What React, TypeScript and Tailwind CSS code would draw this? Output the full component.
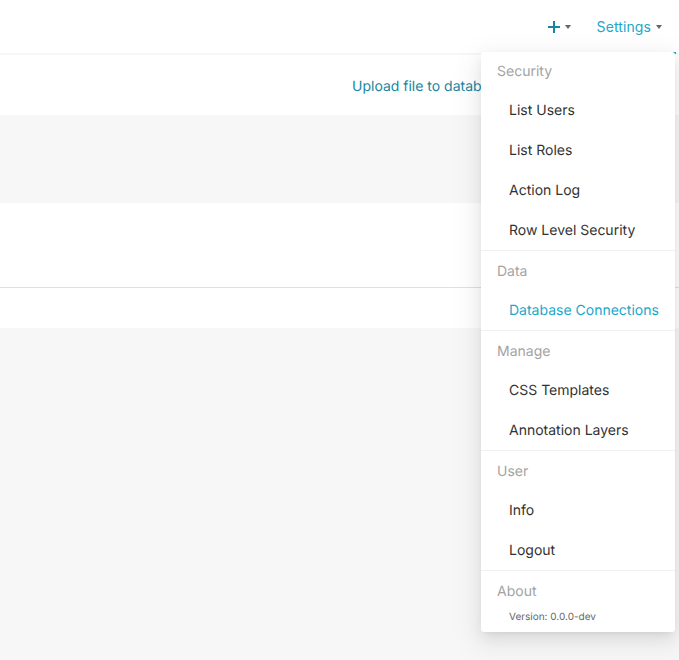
const Caret = () => (
  <span className="ml-[5px] inline-block h-0 w-0 border-x-[3px] border-t-[4px] border-x-transparent border-t-[#666666]" />
);

const menu = [
  { title: "Security", items: ["List Users", "List Roles", "Action Log", "Row Level Security"] },
  { title: "Data", items: ["Database Connections"] },
  { title: "Manage", items: ["CSS Templates", "Annotation Layers"] },
  { title: "User", items: ["Info", "Logout"] },
];

const App = () => {
  return (
    <div className="relative flex h-[660px] w-[679px] flex-col overflow-hidden bg-[#f7f7f7] font-['Inter',sans-serif] text-sm [text-rendering:geometricPrecision]">
      {/* Top nav */}
      <header className="mb-[2px] flex h-[53px] items-center justify-end bg-white pr-[17px]">
        <button className="flex items-center text-[#1a85a0]">
          <svg width="12" height="12" viewBox="0 0 12 12" fill="none" stroke="currentColor" strokeWidth="2">
            <path d="M0 6H12M6 0V12" />
          </svg>
          <Caret />
        </button>
        <button className="ml-[26px] flex items-center tracking-[0.1px] text-[#20a7c9]">
          Settings
          <Caret />
        </button>
      </header>

      <div className="flex h-[60px] items-center bg-white pl-[352px] pt-1">
        <a className="whitespace-nowrap text-[#1a85a0]">Upload file to database</a>
      </div>

      <div className="mt-[88px] h-[85px] border-b border-[#e0e0e0] bg-white" />
      <div className="h-10 bg-white" />

      {/* active underline of Settings, mostly hidden by the menu */}
      <div className="absolute left-[586px] top-[52px] h-[2px] w-[90px] bg-[#20a7c9]" />

      {/* Settings dropdown */}
      <div className="absolute left-[481px] top-[52px] w-[194px] rounded-[3px] bg-white shadow-[0_3px_6px_-4px_rgba(0,0,0,0.12),0_6px_16px_0_rgba(0,0,0,0.08),0_9px_28px_8px_rgba(0,0,0,0.05)]">
        {menu.map((group, index) => (
          <div key={group.title} className="border-b border-[#f0f0f0]">
            <div className={`flex items-center pl-4 pt-[2px] text-[#a3a3a3] ${index === 0 ? "h-[38px]" : "h-[39px]"}`}>
              {group.title}
            </div>
            {group.items.map((item) => (
              <div
                key={item}
                className={`flex h-10 items-center pl-7 pt-[2px] ${item === "Database Connections" ? "text-[#20a7c9]" : "text-[#323232]"}`}
              >
                {item}
              </div>
            ))}
          </div>
        ))}
        <div className="flex h-[39px] items-center pl-4 pt-[2px] text-[#a3a3a3]">About</div>
        <div className="h-[22px] pl-7 pt-px text-[10px] leading-3 text-[#666666]">Version: 0.0.0-dev</div>
      </div>
    </div>
  );
};

export default App;
